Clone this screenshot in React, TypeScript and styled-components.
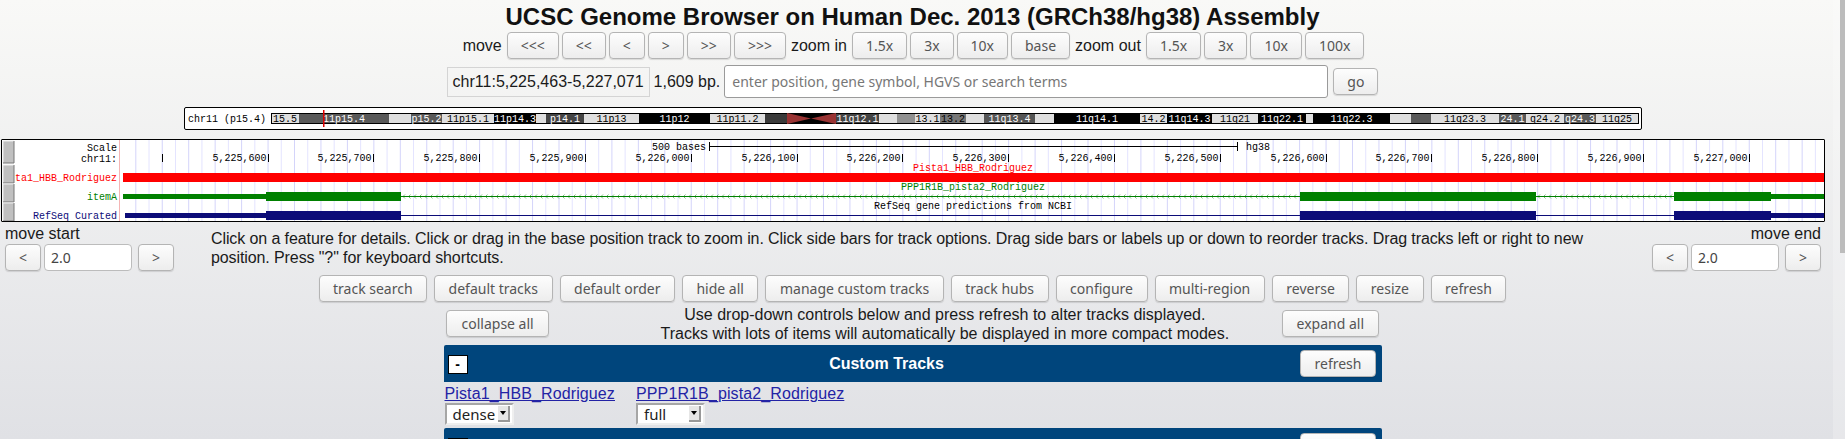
import React from "react";
import styled, { createGlobalStyle } from "styled-components";

const Global = createGlobalStyle`
  html, body { margin: 0; padding: 0; height: 439px; overflow: hidden; }
  body {
    background: linear-gradient(180deg, #f9f9f7 0%, #e0e1e5 100%);
    font-family: "Liberation Sans", Arial, sans-serif;
    font-size: 16px;
    color: #1a1a1a;
  }
`;

const Page = styled.div`
  width: 1825px;
  height: 439px;
  overflow: hidden;
  display: flex;
  flex-direction: column;
  align-items: center;
  & > * { flex: none; }
`;
const Title = styled.h1`
  margin: 0;
  height: 32px;
  line-height: 34px;
  font-size: 24px;
  font-weight: 700;
  color: #111;
  white-space: nowrap;
`;
const NavRow = styled.div`
  display: flex;
  align-items: center;
  gap: 3px;
  height: 27px;
`;
const NavLabel = styled.span`
  margin: 0 2px;
  white-space: nowrap;
`;
const Button = styled.button<{ $pad?: number }>`
  box-sizing: border-box;
  height: 27px;
  padding: 0 ${(p) => p.$pad ?? 13}px;
  border: 1px solid #b4b4b4;
  border-radius: 4px;
  background: linear-gradient(180deg, #fdfdfd 0%, #ededed 100%);
  box-shadow: 0 1px 1px rgba(0, 0, 0, 0.12);
  color: #555;
  font-family: "Noto Sans", sans-serif;
  font-size: 14px;
  white-space: nowrap;
`;
const PosRow = styled.div`
  display: flex;
  align-items: center;
  height: 33px;
  margin-top: 6px;
`;
const PosBox = styled.div`
  box-sizing: border-box;
  width: 203px;
  height: 30px;
  line-height: 28px;
  border: 1px solid #d4d4d4;
  text-align: center;
  white-space: nowrap;
`;
const BpText = styled.span`
  margin: 0 4px;
  white-space: nowrap;
`;
const SearchInput = styled.input`
  box-sizing: border-box;
  width: 604px;
  height: 33px;
  padding: 0 7px;
  border: 1px solid #9a9a9a;
  border-radius: 3px;
  background: #fff;
  font-family: "Noto Sans", sans-serif;
  font-size: 14px;
  margin-right: 5px;
  &::placeholder { color: #777; opacity: 1; }
`;
const IdeogramBox = styled.div`
  box-sizing: border-box;
  width: 1458px;
  height: 23px;
  margin-top: 9px;
  border: 1px solid #000;
  border-radius: 2px;
  background: #fff;
  svg { display: block; }
`;
const TrackBox = styled.div`
  box-sizing: border-box;
  align-self: flex-start;
  width: 1824px;
  height: 83px;
  margin: 9px 0 0 1px;
  border: 1px solid #000;
  border-radius: 1px;
  background: #fff;
  svg { display: block; }
`;
const MoveRow = styled.div`
  align-self: stretch;
  display: flex;
  justify-content: space-between;
  height: 53px;
`;
const MovePanel = styled.div<{ $end?: boolean }>`
  flex: none;
  box-sizing: border-box;
  width: 178px;
  padding: 3px 4px 0 5px;
  display: flex;
  flex-direction: column;
  align-items: ${(p) => (p.$end ? "flex-end" : "flex-start")};
`;
const MoveLabel = styled.div`
  height: 19px;
  line-height: 18px;
  font-size: 16px;
`;
const MoveControls = styled.div`
  display: flex;
  align-items: center;
`;
const MoveInput = styled.input`
  box-sizing: border-box;
  width: 88px;
  height: 27px;
  margin: 0 6px 0 3px;
  padding: 0 6px;
  border: 1px solid #bcbcbc;
  border-radius: 4px;
  background: #fff;
  font-family: "Noto Sans", sans-serif;
  font-size: 14px;
  color: #444;
`;
const Help = styled.p`
  width: 1390px;
  margin: 7px auto 0 33px;
  line-height: 19px;
  font-size: 16px;
  letter-spacing: -0.1px;
`;
const ButtonRow = styled.div`
  display: flex;
  gap: 7px;
  height: 27px;
`;
const Controls = styled.div`
  width: 933px;
  height: 40px;
  margin-top: 3px;
  display: flex;
  justify-content: space-between;
  align-items: flex-start;
  button { margin-top: 5px; }
`;
const ControlText = styled.div`
  margin-top: -0.5px;
  padding-left: 59px;
  line-height: 19px;
  text-align: center;
  white-space: nowrap;
`;
const Section = styled.section`
  box-sizing: border-box;
  width: 938px;
`;
const SectionHead = styled.div`
  height: 37px;
  padding: 0 5px 0 4px;
  display: flex;
  align-items: center;
  justify-content: space-between;
  background: #00457c;
  border-radius: 2px 2px 0 0;
`;
const Minus = styled.span`
  box-sizing: border-box;
  width: 20px;
  height: 19px;
  margin-top: 1px;
  border: 1px solid #000;
  background: #fff;
  color: #000;
  display: flex;
  align-items: center;
  justify-content: center;
  font-weight: 700;
  font-size: 14px;
`;
const SectionTitle = styled.span`
  margin-left: 6px;
  color: #fff;
  font-weight: 700;
  font-size: 16px;
`;
const TrackGrid = styled.div`
  display: flex;
  gap: 21px;
  height: 46px;
  padding: 3px 0 0 1px;
  box-sizing: border-box;
`;
const TrackCell = styled.div`
  display: flex;
  flex-direction: column;
  align-items: flex-start;
`;
const TrackLink = styled.a`
  height: 18px;
  line-height: 18px;
  color: #2323a5;
  text-decoration: underline;
  font-size: 16px;
  letter-spacing: 0.12px;
`;
const SelectBox = styled.div`
  box-sizing: border-box;
  width: 69px;
  height: 22px;
  padding: 0 2px 0 6px;
  display: flex;
  align-items: center;
  justify-content: space-between;
  background: #fff;
  border-style: solid;
  border-width: 2px;
  border-color: #a6a6a6 #efefef #efefef #a6a6a6;
  font-family: "Noto Sans", sans-serif;
  font-size: 15px;
  color: #222;
`;
const SelectArrow = styled.span`
  box-sizing: border-box;
  width: 12px;
  height: 16px;
  display: flex;
  align-items: center;
  justify-content: center;
  background: #e6e6e6;
  border-right: 2px solid #999;
  border-bottom: 2px solid #999;
  &::after {
    content: "";
    border: 3px solid transparent;
    border-top: 4px solid #000;
    border-bottom: 0;
  }
`;
const ScrollTrack = styled.div`
  position: fixed;
  top: 0;
  right: 0;
  width: 12px;
  height: 439px;
  background: rgba(255, 255, 255, 0.22);
`;
const ScrollThumb = styled.div`
  position: absolute;
  top: 0;
  right: 0;
  width: 5px;
  height: 253px;
  background: #bcbcbc;
`;

type Band = [number, number, string, string?, string?];
const L = "#dfdfdf", K = "#000", D = "#595959", W = "#fff";
const bands: Band[] = [
  [270, 298, L, "15.5", K], [298, 388, D, "11p15.4", W], [388, 410, L], [410, 441, D, "p15.2", W],
  [441, 493, L, "11p15.1", K], [493, 535, K, "11p14.3", W], [535, 545, L], [545, 583, "#444", "p14.1", W],
  [583, 638, L, "11p13", K], [638, 709, K, "11p12", W], [709, 764, L, "11p11.2", K], [764, 786, "#3a3a3a"],
  [835, 878, "#444", "11q12.1", W], [878, 896, L], [896, 914, "#909090"], [914, 939, L, "13.1", K],
  [939, 965, "#777", "13.2", K], [965, 983, L], [983, 1034, "#555", "11q13.4", W], [1034, 1053, L],
  [1053, 1139, K, "11q14.1", W], [1139, 1166, L, "14.2", K], [1166, 1211, K, "11q14.3", W],
  [1211, 1257, L, "11q21", K], [1257, 1305, K, "11q22.1", W], [1305, 1312, L], [1312, 1389, K, "11q22.3", W],
  [1389, 1410, L], [1410, 1430, D], [1430, 1498, L, "11q23.3", K], [1498, 1525, D, "24.1", W],
  [1525, 1563, L, "q24.2", K], [1563, 1595, D, "q24.3", W], [1595, 1637, L, "11q25", K],
];

const mono = `"Liberation Mono", "DejaVu Sans Mono", monospace`;

const Ideogram = () => (
  <svg width={1456} height={21} viewBox="184 108 1456 21" fontFamily={mono} fontSize={10}>
    <text x={187} y={122} fill="#000">chr11 (p15.4)</text>
    <rect x={270} y={113} width={1368} height={11} fill="#000" />
    {bands.map(([a, b, f, t, c]) => (
      <g key={a}>
        <rect x={a + (a === 270 ? 1 : 0)} y={114} width={b - a - (a === 270 ? 1 : 0)} height={9} fill={f} />
        {t && (
          <text x={(a + b) / 2} y={122} fill={c} textAnchor="middle">{t}</text>
        )}
      </g>
    ))}
    <polygon points="786,113 810,118.5 786,124" fill="#993333" />
    <polygon points="835,113 810,118.5 835,124" fill="#993333" />
    <rect x={322} y={110} width={1.5} height={17} fill="#e00000" />
  </svg>
);

const ticks = Array.from({ length: 16 }, (_, i) => i - 1);
const gridLines = Array.from({ length: 128 }, (_, i) => 135.3 + i * 13.225);
const chevrons = [
  ...Array.from({ length: 163 }, (_, i) => 403 + i * 5.5),
  ...Array.from({ length: 25 }, (_, i) => 1538 + i * 5.5),
];
const GREEN = "#008000";
const NAVY = "#0c0c78";

const Side = ({ y, h }: { y: number; h: number }) => (
  <g>
    <rect x={3} y={y} width={11} height={h} fill="#c0c0c0" />
    <path d={`M3 ${y + h}V${y}H14`} stroke="#eee" fill="none" />
    <path d={`M14 ${y}V${y + h}H3`} stroke="#777" fill="none" />
  </g>
);

const Mono = ({ x, y, c = "#000", end, children }: { x: number; y: number; c?: string; end?: boolean; children?: React.ReactNode }) => (
  <text x={x} y={y} fill={c} textAnchor={end ? "end" : "start"}>{children}</text>
);

const Tracks = () => (
  <svg width={1822} height={81} viewBox="2 140 1822 81" fontFamily={mono} fontSize={10}>
    {gridLines.map((x, i) => (
      <rect key={x} x={x} y={140} width={1} height={81} fill={i % 2 ? "#e4e4ff" : "#d4d4fa"} />
    ))}
    <rect x={14.5} y={140} width={105} height={81} fill="#fff" />
    <rect x={119} y={140} width={1} height={81} fill="#f5b5b5" />
    <Side y={141} h={22} /><Side y={165} h={18} /><Side y={184} h={18} /><Side y={203} h={18} />
    <Mono x={117} y={151} end>Scale</Mono>
    <Mono x={117} y={162} end>chr11:</Mono>
    <Mono x={117} y={181} c="#f00" end>ta1_HBB_Rodriguez</Mono>
    <Mono x={117} y={200} c={GREEN} end>itemA</Mono>
    <Mono x={117} y={219} c={NAVY} end>RefSeq Curated</Mono>

    <Mono x={706} y={150} end>500 bases</Mono>
    <path d="M709.5 142V151M709.5 146.5H1237.5M1237.5 142V151" stroke="#000" fill="none" />
    <Mono x={1246} y={150}>hg38</Mono>
    {ticks.map((i) => {
      const x = Math.round(267.6 + i * 105.8) + 0.5;
      return (
        <g key={i}>
          <path d={`M${x} 154V162`} stroke="#000" />
          {i >= 0 && <Mono x={x - 2} y={161} end>{(5225600 + i * 100).toLocaleString("en-US")}</Mono>}
        </g>
      );
    })}
    <Mono x={913} y={171} c="#f00">Pista1_HBB_Rodriguez</Mono>
    <rect x={123} y={173} width={1702} height={9} fill="#f00" />
    <Mono x={901} y={190} c={GREEN}>PPP1R1B_pista2_Rodriguez</Mono>
    <rect x={401} y={196} width={1300 - 401} height={1} fill={GREEN} />
    <rect x={1536} y={196} width={138} height={1} fill={GREEN} />
    {chevrons.map((x) => (
      <path key={x} d={`M${x + 2} 194.5L${x} 196.5L${x + 2} 198.5`} stroke={GREEN} strokeOpacity={0.5} fill="none" />
    ))}
    <rect x={123} y={194} width={143} height={5} fill={GREEN} />
    <rect x={266} y={192} width={135} height={9} fill={GREEN} />
    <rect x={1300} y={192} width={236} height={9} fill={GREEN} />
    <rect x={1674} y={192} width={97} height={9} fill={GREEN} />
    <rect x={1771} y={194} width={54} height={5} fill={GREEN} />
    <Mono x={874} y={209}>RefSeq gene predictions from NCBI</Mono>
    <rect x={401} y={215} width={1273} height={1} fill={NAVY} />
    <rect x={125} y={213} width={141} height={5} fill={NAVY} />
    <rect x={266} y={211} width={135} height={9} fill={NAVY} />
    <rect x={1300} y={211} width={236} height={9} fill={NAVY} />
    <rect x={1674} y={211} width={97} height={9} fill={NAVY} />
    <rect x={1771} y={213} width={54} height={5} fill={NAVY} />
  </svg>
);

const navA = ["<<<", "<<", "<", ">", ">>", ">>>"];
const zoomIn = ["1.5x", "3x", "10x", "base"];
const zoomOut = ["1.5x", "3x", "10x", "100x"];
const actions = ["track search", "default tracks", "default order", "hide all", "manage custom tracks", "track hubs", "configure", "multi-region", "reverse", "resize", "refresh"];

const MoveBlock = ({ label, end }: { label: string; end?: boolean }) => (
  <MovePanel $end={end}>
    <MoveLabel>{label}</MoveLabel>
    <MoveControls>
      <Button>&lt;</Button>
      <MoveInput defaultValue="2.0" />
      <Button>&gt;</Button>
    </MoveControls>
  </MovePanel>
);

const TrackPanel = ({ title }: { title: string }) => (
  <SectionHead>
    <Minus>-</Minus>
    <SectionTitle>{title}</SectionTitle>
    <Button $pad={14}>refresh</Button>
  </SectionHead>
);

export default function App() {
  return (
    <>
      <Global />
      <Page>
        <Title>UCSC Genome Browser on Human Dec. 2013 (GRCh38/hg38) Assembly</Title>
        <NavRow>
          <NavLabel>move</NavLabel>
          {navA.map((t) => <Button key={t}>{t}</Button>)}
          <NavLabel>zoom in</NavLabel>
          {zoomIn.map((t) => <Button key={t}>{t}</Button>)}
          <NavLabel>zoom out</NavLabel>
          {zoomOut.map((t) => <Button key={t}>{t}</Button>)}
        </NavRow>
        <PosRow>
          <PosBox>chr11:5,225,463-5,227,071</PosBox>
          <BpText>1,609 bp.</BpText>
          <SearchInput placeholder="enter position, gene symbol, HGVS or search terms" />
          <Button>go</Button>
        </PosRow>
        <IdeogramBox><Ideogram /></IdeogramBox>
        <TrackBox><Tracks /></TrackBox>
        <MoveRow>
          <MoveBlock label="move start" />
          <Help>Click on a feature for details. Click or drag in the base position track to zoom in. Click side bars for track options. Drag side bars or labels up or down to reorder tracks. Drag tracks left or right to new position. Press "?" for keyboard shortcuts.</Help>
          <MoveBlock label="move end" end />
        </MoveRow>
        <ButtonRow>
          {actions.map((t) => <Button key={t} $pad={13.5}>{t}</Button>)}
        </ButtonRow>
        <Controls>
          <Button $pad={14.5}>collapse all</Button>
          <ControlText>
            Use drop-down controls below and press refresh to alter tracks displayed.<br />
            Tracks with lots of items will automatically be displayed in more compact modes.
          </ControlText>
          <Button $pad={14}>expand all</Button>
        </Controls>
        <Section>
          <TrackPanel title="Custom Tracks" />
          <TrackGrid>
            <TrackCell>
              <TrackLink href="#">Pista1_HBB_Rodriguez</TrackLink>
              <SelectBox>dense<SelectArrow /></SelectBox>
            </TrackCell>
            <TrackCell>
              <TrackLink href="#">PPP1R1B_pista2_Rodriguez</TrackLink>
              <SelectBox>full<SelectArrow /></SelectBox>
            </TrackCell>
          </TrackGrid>
          <TrackPanel title="" />
        </Section>
      </Page>
      <ScrollTrack><ScrollThumb /></ScrollTrack>
    </>
  );
}
